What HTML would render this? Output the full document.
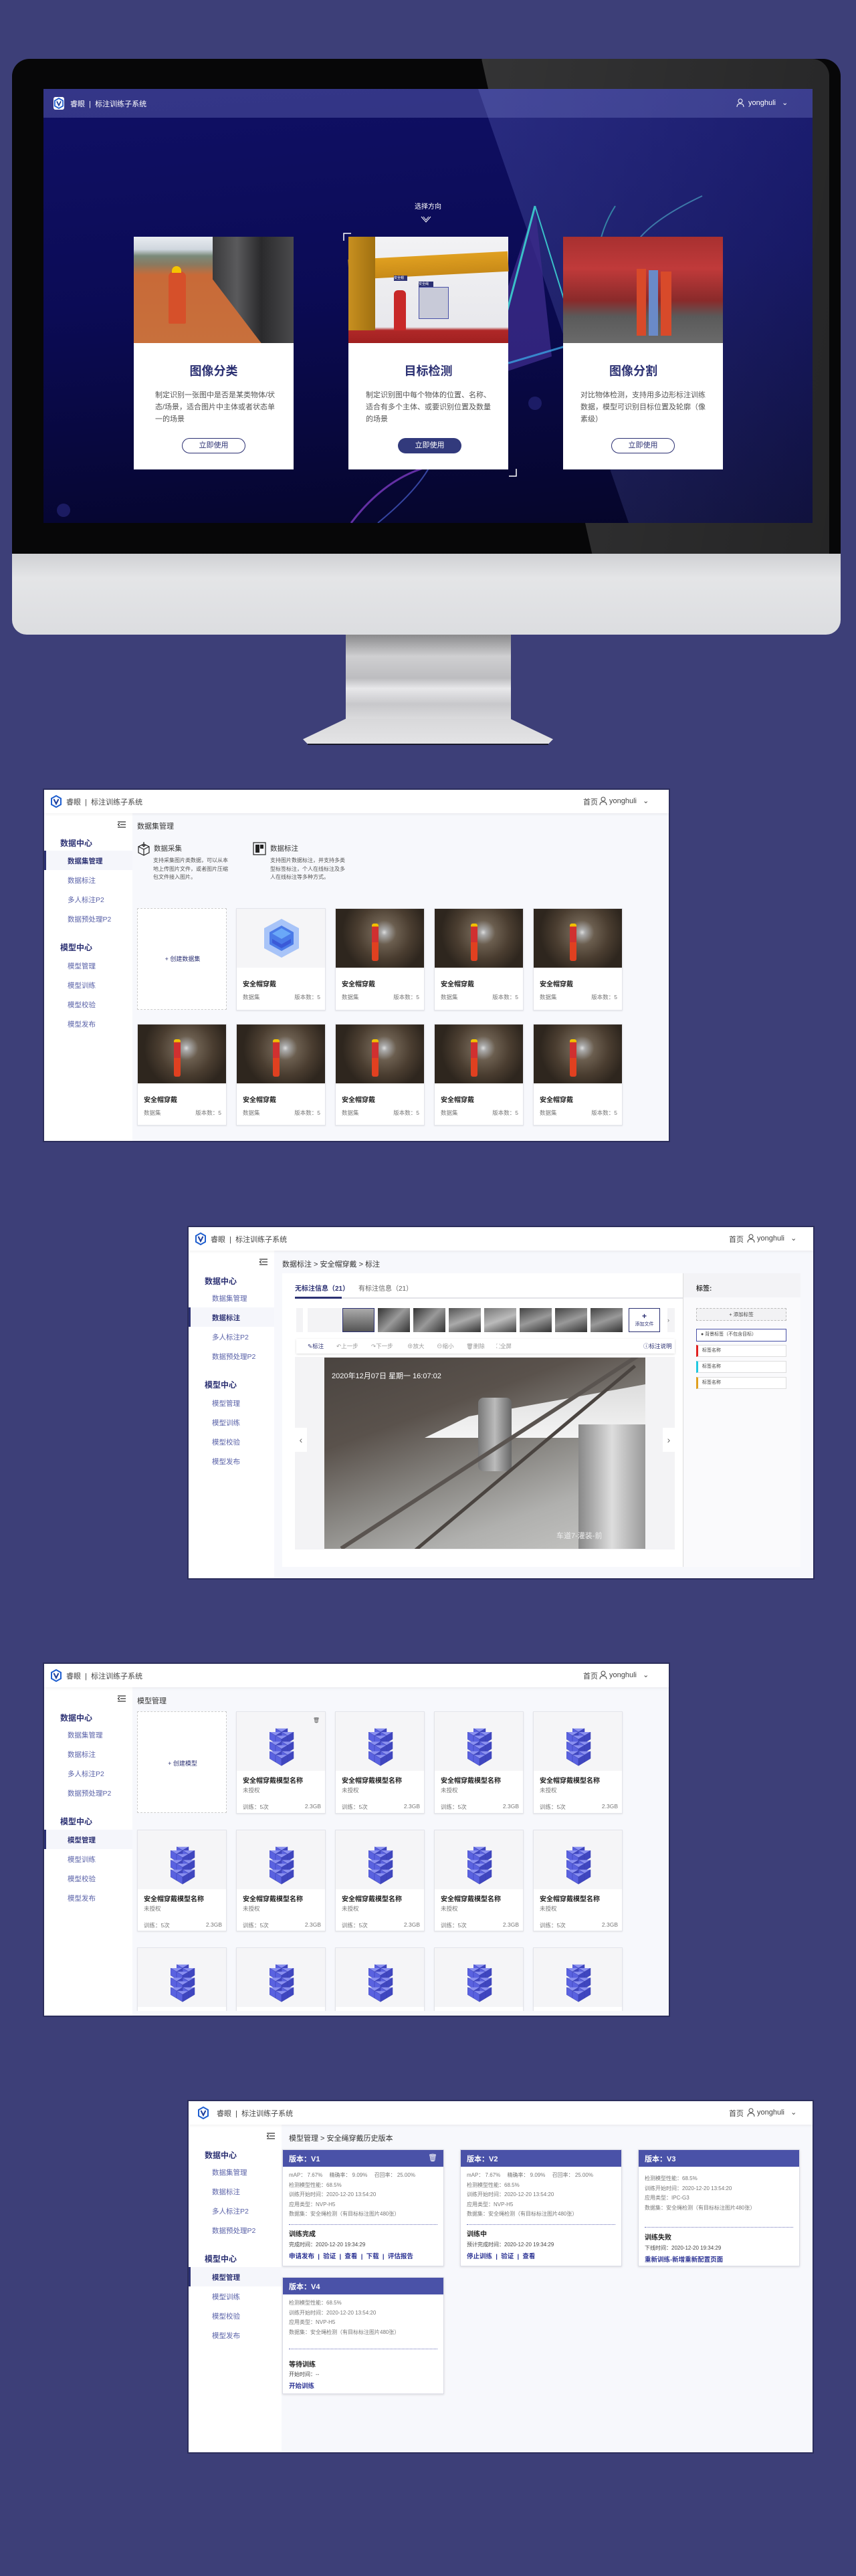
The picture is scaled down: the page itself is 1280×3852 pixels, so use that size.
<!DOCTYPE html>
<html><head><meta charset="utf-8">
<style>
*{margin:0;padding:0;box-sizing:border-box}
body{width:1280px;height:3852px;position:relative;overflow:hidden;background:#3d3f78;font-family:"Liberation Sans","Noto Sans CJK SC",sans-serif;color:#333}
.a{position:absolute}
.panel{position:absolute;background:#f7f8fc;overflow:hidden;box-shadow:0 0 0 2px #2c2e5c}
.hdr{position:absolute;left:0;top:0;right:0;height:35px;background:#fff;box-shadow:0 2px 4px rgba(0,0,0,.05);z-index:2}
.logo{position:absolute;left:10px;top:8px;width:16px;height:19px}
.brand{position:absolute;left:33px;top:10px;font-size:11px;color:#444;white-space:nowrap}
.usr{position:absolute;top:10px;font-size:11px;color:#444;white-space:nowrap}
.sb{position:absolute;left:0;top:35px;bottom:0;background:#fff}
.sb .t{position:absolute;right:10px;top:12px;width:12px;height:10px}
.sb .h{position:absolute;left:24px;font-size:12px;font-weight:bold;color:#2c3173}
.sb .i{position:absolute;left:35px;font-size:10.5px;color:#5a62a8}
.sb .act{position:absolute;left:0;right:0;height:29px;background:#f5f6fb;border-left:3px solid #2c3173}
.sb .i.on{color:#2c3173;font-weight:bold}
.card{position:absolute;width:134px;background:#fff;border:1px solid #e3e4ea;box-shadow:0 1px 2px rgba(0,0,0,.08);overflow:hidden}
.card .img{position:absolute;left:0;top:0;right:0;height:88px}
.card .tt{position:absolute;left:9px;font-size:10px;font-weight:bold;color:#222;white-space:nowrap}
.card .m{position:absolute;font-size:8.5px;color:#777;white-space:nowrap}
.tunnel{background:radial-gradient(circle at 55% 40%,#ddd 0,#aaa 5%,#6b5e4f 20%,#4a3d30 45%,#2e261e 70%),#3a3028}
.tunnel::after{content:"";position:absolute;left:54px;top:22px;width:10px;height:56px;background:linear-gradient(#f0c000 0,#f0c000 8%,#d03030 8%,#d03030 50%,#e04020 50%);border-radius:3px}
.cube{background:#f5f5f7}
.v{position:absolute;width:242px;background:#fff;border:1px solid #dcdde6;box-shadow:0 1px 3px rgba(0,0,0,.12)}
.v .vh{height:25px;background:#4a52a8;color:#fff;font-size:11px;font-weight:bold;padding:5px 9px}
.v .l{position:absolute;left:9px;font-size:8px;color:#777;white-space:nowrap}
.v .dl{position:absolute;left:9px;right:9px;border-top:1px dotted #6b70b8}
.v .s{position:absolute;left:9px;font-size:10px;font-weight:bold;color:#222}
.v .k{position:absolute;left:9px;font-size:9.5px;color:#2c3394;font-weight:bold;white-space:nowrap}
</style></head><body>

<svg width="0" height="0" style="position:absolute">
<defs>
<symbol id="lg" viewBox="0 0 16 19"><path d="M8 1 L15 5 L15 14 L8 18 L1 14 L1 5Z" fill="none" stroke="#1f5fd0" stroke-width="2"/><path d="M4.5 6 L8 13 L11.5 6" fill="none" stroke="#1f3f9a" stroke-width="2"/></symbol>
<symbol id="cb" viewBox="0 0 60 80">
<g stroke="#3b42b0" stroke-width=".5">
<g><path d="M0 0 l10 -6 l10 6 l-10 6z" fill="#8a90f0"/><path d="M0 0 v12 l10 6 v-12z" fill="#5a62e0"/><path d="M20 0 v12 l-10 6 v-12z" fill="#3f46c0"/></g>
</g></symbol>
<symbol id="cubes" viewBox="0 0 60 80">
<use href="#cb" x="20" y="14"/>
<use href="#cb" x="10" y="20"/><use href="#cb" x="30" y="20"/>
<use href="#cb" x="20" y="26"/>
<use href="#cb" x="10" y="36"/><use href="#cb" x="30" y="36"/>
<use href="#cb" x="20" y="42"/>
<use href="#cb" x="10" y="52"/><use href="#cb" x="30" y="52"/>
<use href="#cb" x="20" y="58"/>
</symbol>
<symbol id="us" viewBox="0 0 12 14"><circle cx="6" cy="4" r="3" fill="none" stroke="#444" stroke-width="1"/><path d="M1 13 Q1 8 6 8 Q11 8 11 13" fill="none" stroke="#444" stroke-width="1"/></symbol>
<symbol id="tg" viewBox="0 0 12 10"><path d="M0 1h12M4 5h8M0 9h12M3 3L0 5l3 2" fill="none" stroke="#333" stroke-width="1.2"/></symbol>
</defs></svg>

<!-- ============ MONITOR ============ -->
<div class="a" style="left:18px;top:88px;width:1239px;height:745px;background:#070708;border-radius:26px 26px 0 0"></div>
<div class="a" style="left:720px;top:88px;width:520px;height:745px;background:linear-gradient(100deg,rgba(255,255,255,0) 0,rgba(255,255,255,.18) 1px,rgba(255,255,255,.12) 100%);clip-path:polygon(0 0,100% 0,100% 100%,32% 100%);border-radius:0 26px 0 0"></div>
<div class="a" style="left:18px;top:828px;width:1239px;height:121px;background:linear-gradient(#cfd0d3,#e4e5e7 30%,#dcdde0);border-radius:0 0 22px 22px"></div>
<div class="a" style="left:517px;top:949px;width:247px;height:130px;background:linear-gradient(#8a8a8c,#cfcfd1 25%,#bdbdc0 50%,#e8e8ea 62%,#c8c8cb 80%,#dedee0)"></div>
<div class="a" style="left:453px;top:1075px;width:374px;height:38px;background:linear-gradient(#d8d8da,#e4e4e6);clip-path:polygon(17% 0,83% 0,100% 80%,98% 100%,2% 100%,0 80%);"></div>
<div class="a" style="left:460px;top:1112px;width:360px;height:2px;background:#1a1a2a"></div>

<div class="a" style="left:65px;top:133px;width:1150px;height:649px;overflow:hidden;background:linear-gradient(175deg,#101066 0,#0b0b55 45%,#070738 80%,#050528 100%)">
  <div class="a" style="left:650px;top:0;width:500px;height:649px;background:linear-gradient(100deg,rgba(120,130,220,.25),rgba(80,90,180,.15));clip-path:polygon(0 0,100% 0,100% 100%,45% 100%)"></div>
  <svg class="a" style="left:0;top:0" width="1150" height="649">
    <path d="M855 175 Q820 230 830 300 Q840 360 790 450" stroke="#3a9ab0" stroke-width="2" fill="none" opacity=".8"/>
    <path d="M985 160 Q900 200 880 240 Q860 290 820 330" stroke="#4aa0c0" stroke-width="2" fill="none" opacity=".7"/>
    <path d="M735 175 L660 400 L670 430 L760 400 Z" fill="#3b2a8a" opacity=".8"/>
    <path d="M735 175 L670 420" stroke="#3ac0c8" stroke-width="3"/>
    <path d="M735 175 L780 320" stroke="#3ac0c8" stroke-width="2"/>
    <path d="M695 410 L1000 320" stroke="#3aa0e0" stroke-width="3" opacity=".8"/>
    <path d="M460 649 Q520 570 600 560 Q650 540 680 520" stroke="#7a3ac0" stroke-width="3" fill="none" opacity=".8"/>
    <path d="M500 649 Q560 600 580 560 Q600 530 640 510" stroke="#4a60d0" stroke-width="2" fill="none" opacity=".7"/>
    <circle cx="805" cy="232" r="8" fill="#3a4aa0" opacity=".6"/><circle cx="990" cy="230" r="7" fill="#3a4aa0" opacity=".5"/>
    <circle cx="30" cy="630" r="10" fill="#2a2a80" opacity=".6"/><circle cx="735" cy="470" r="10" fill="#2a2a80" opacity=".6"/>
  </svg>
  <div class="a" style="left:0;top:0;width:1150px;height:43px;background:rgba(120,125,200,.35)"></div>
  <svg class="a" style="left:15px;top:12px" width="16" height="19"><rect x="0" y="0" width="16" height="19" rx="3" fill="#fff"/><use href="#lg" x="1" y="1" width="14" height="17"/></svg>
  <div class="a" style="left:40px;top:14px;font-size:11px;color:#fff;white-space:nowrap">睿眼 &nbsp;|&nbsp; 标注训练子系统</div>
  <svg class="a" style="left:1036px;top:14px" width="12" height="14"><circle cx="6" cy="4" r="3" fill="none" stroke="#fff"/><path d="M1 13 Q1 8 6 8 Q11 8 11 13" fill="none" stroke="#fff"/></svg>
  <div class="a" style="left:1054px;top:14px;font-size:11px;color:#fff">yonghuli &nbsp;&nbsp;⌄</div>
  <div class="a" style="left:555px;top:167px;font-size:10px;color:#fff">选择方向</div>
  <svg class="a" style="left:564px;top:190px" width="16" height="12"><path d="M1 1l7 8 7-8M4 1l4 5 4-5" stroke="#fff" fill="none"/></svg>

  <div class="a" style="left:135px;top:221px;width:239px;height:348px;background:#fff">
    <div class="a" style="left:0;top:0;width:239px;height:159px;background:linear-gradient(#e8ecf0 0,#cfd6de 12%,#7a8a7a 18%,#8a7a60 26%,#c86a38 36%,#c8703c 100%)"></div>
    <div class="a" style="left:118px;top:0;width:121px;height:159px;background:linear-gradient(90deg,#3a3a3c,#5a5a5c 30%,#2a2a2c 60%,#4a4a4c);clip-path:polygon(0 0,100% 0,100% 100%,60% 100%,0 40%)"></div>
    <div class="a" style="left:52px;top:52px;width:26px;height:78px;background:#d6502a;border-radius:8px 8px 2px 2px"></div>
    <div class="a" style="left:57px;top:44px;width:14px;height:10px;background:#f5c400;border-radius:7px 7px 0 0"></div>
    <div class="a" style="left:0;top:187px;width:239px;text-align:center;font-size:18px;font-weight:bold;color:#2c3173">图像分类</div>
    <div class="a" style="left:32px;top:228px;width:180px;font-size:11px;line-height:18px;color:#555">制定识别一张图中是否是某类物体/状态/场景，适合图片中主体或者状态单一的场景</div>
    <div class="a" style="left:72px;top:301px;width:95px;height:23px;border:1.5px solid #2c3173;border-radius:12px;text-align:center;font-size:11px;line-height:20px;color:#2c3173">立即使用</div>
  </div>
  <div class="a" style="left:456px;top:221px;width:239px;height:348px;background:#fff">
    <div class="a" style="left:0;top:0;width:239px;height:159px;background:linear-gradient(#f2f2f4,#e8e8ec 85%,#b02828 88%,#a02020)"></div>
    <div class="a" style="left:0;top:28px;width:239px;height:30px;background:linear-gradient(#e0a020,#c88a18);transform:rotate(-3deg)"></div>
    <div class="a" style="left:0;top:0;width:40px;height:140px;background:linear-gradient(90deg,#c89020,#a07010)"></div>
    <div class="a" style="left:68px;top:80px;width:18px;height:60px;background:#c82828;border-radius:6px 6px 0 0"></div>
    <div class="a" style="left:105px;top:75px;width:45px;height:48px;background:#c8cad8;border:1px solid #4a52a8"></div>
    <div class="a" style="left:68px;top:58px;width:20px;height:8px;background:#2c3173;font-size:5px;color:#fff">安全帽</div>
    <div class="a" style="left:105px;top:67px;width:22px;height:8px;background:#2c3173;font-size:5px;color:#fff">安全绳</div>
    <div class="a" style="left:0;top:187px;width:239px;text-align:center;font-size:18px;font-weight:bold;color:#2c3173">目标检测</div>
    <div class="a" style="left:26px;top:228px;width:190px;font-size:11px;line-height:18px;color:#555">制定识别图中每个物体的位置、名称、适合有多个主体、或要识别位置及数量的场景</div>
    <div class="a" style="left:74px;top:301px;width:95px;height:23px;background:#323a7c;border-radius:12px;text-align:center;font-size:11px;line-height:23px;color:#fff">立即使用</div>
  </div>
  <div class="a" style="left:777px;top:221px;width:239px;height:348px;background:#fff">
    <div class="a" style="left:0;top:0;width:239px;height:159px;background:linear-gradient(#a83030,#c03a3a 30%,#8a2a2a 60%,#5a5a5a 75%,#6a6a6a)"></div>
    <div class="a" style="left:110px;top:48px;width:14px;height:100px;background:#d84a2a"></div>
    <div class="a" style="left:128px;top:50px;width:14px;height:98px;background:#6a8ac8"></div>
    <div class="a" style="left:146px;top:52px;width:16px;height:96px;background:#d84a2a"></div>
    <div class="a" style="left:0;top:187px;width:210px;text-align:center;font-size:18px;font-weight:bold;color:#2c3173">图像分割</div>
    <div class="a" style="left:26px;top:228px;width:190px;font-size:11px;line-height:18px;color:#555">对比物体检测，支持用多边形标注训练数据，模型可识别目标位置及轮廓（像素级）</div>
    <div class="a" style="left:72px;top:301px;width:95px;height:23px;border:1.5px solid #2c3173;border-radius:12px;text-align:center;font-size:11px;line-height:20px;color:#2c3173">立即使用</div>
  </div>
  <svg class="a" style="left:448px;top:215px" width="260" height="365"><path d="M1 12 V1 H12 M248 364 H259 V353" stroke="#fff" stroke-width="1.5" fill="none"/></svg>
</div>

<!-- ============ PANEL 2 ============ -->
<div class="panel" style="left:66px;top:1181px;width:934px;height:525px">
  <div class="hdr"><svg class="logo"><use href="#lg"/></svg><div class="brand">睿眼 &nbsp;|&nbsp; 标注训练子系统</div>
  <div class="usr" style="left:806px">首页</div><svg class="a" style="left:830px;top:10px" width="12" height="14"><use href="#us"/></svg><div class="usr" style="left:845px">yonghuli &nbsp;&nbsp;⌄</div></div>
  <div class="sb" style="width:132px">
    <svg class="t"><use href="#tg"/></svg>
    <div class="act" style="top:56px"></div>
    <div class="h" style="top:36px">数据中心</div>
    <div class="i on" style="top:64px">数据集管理</div><div class="i" style="top:93px">数据标注</div><div class="i" style="top:122px">多人标注P2</div><div class="i" style="top:151px">数据预处理P2</div>
    <div class="h" style="top:192px">模型中心</div>
    <div class="i" style="top:221px">模型管理</div><div class="i" style="top:250px">模型训练</div><div class="i" style="top:279px">模型校验</div><div class="i" style="top:308px">模型发布</div>
  </div>
  <div class="a" style="left:139px;top:46px;font-size:11px;color:#333">数据集管理</div>
  <svg class="a" style="left:139px;top:77px" width="20" height="22"><path d="M10 4 L18 8 V17 L10 21 L2 17 V8Z M2 8 L10 12 L18 8 M10 12 V21 M10 1 V8 M7 5 L10 8 L13 5" fill="none" stroke="#222" stroke-width="1.2"/></svg>
  <div class="a" style="left:164px;top:80px;font-size:10.5px;color:#333">数据采集</div>
  <div class="a" style="left:163px;top:100px;width:115px;font-size:8px;line-height:12.5px;color:#555">支持采集图片类数据，可以从本地上传图片文件，或者图片压缩包文件接入图片。</div>
  <svg class="a" style="left:311px;top:77px" width="22" height="22"><rect x="2" y="2" width="18" height="18" fill="none" stroke="#222" stroke-width="1.2"/><rect x="5" y="5" width="6" height="12" fill="#222"/><rect x="12" y="5" width="5" height="6" fill="#222"/></svg>
  <div class="a" style="left:338px;top:80px;font-size:10.5px;color:#333">数据标注</div>
  <div class="a" style="left:338px;top:100px;width:115px;font-size:8px;line-height:12.5px;color:#555">支持图片数据标注，并支持多类型标签标注，个人在线标注及多人在线标注等多种方式。</div>

  <div class="a" style="left:139px;top:177px;width:134px;height:152px;border:1px dashed #ccc;background:#fff"><div class="a" style="left:0;top:68px;width:134px;text-align:center;font-size:9px;color:#2c3173">+ 创建数据集</div></div>
  <div class="card" style="left:287px;top:177px;height:153px"><div class="img" style="background:#f5f5f7"><svg class="a" style="left:37px;top:13px" width="60" height="62"><path d="M30 2 L56 16 V46 L30 60 L4 46 V16Z" fill="#a8c4f8"/><path d="M30 12 L48 22 V40 L30 50 L12 40 V22Z" fill="#4a7ae8"/><path d="M30 16 L44 24 L30 32 L16 24Z" fill="#6aa8f8"/><path d="M16 32 L30 40 L44 32 V38 L30 46 L16 38Z" fill="#3a5ad8"/></svg></div><div class="tt" style="top:104px">安全帽穿戴</div><div class="m" style="left:9px;top:126px">数据集</div><div class="m" style="right:7px;top:126px">版本数：5</div></div>
  <div class="card" style="left:435px;top:177px;height:153px"><div class="img tunnel"></div><div class="tt" style="top:104px">安全帽穿戴</div><div class="m" style="left:9px;top:126px">数据集</div><div class="m" style="right:7px;top:126px">版本数：5</div></div>
  <div class="card" style="left:583px;top:177px;height:153px"><div class="img tunnel"></div><div class="tt" style="top:104px">安全帽穿戴</div><div class="m" style="left:9px;top:126px">数据集</div><div class="m" style="right:7px;top:126px">版本数：5</div></div>
  <div class="card" style="left:731px;top:177px;height:153px"><div class="img tunnel"></div><div class="tt" style="top:104px">安全帽穿戴</div><div class="m" style="left:9px;top:126px">数据集</div><div class="m" style="right:7px;top:126px">版本数：5</div></div>

  <div class="card" style="left:139px;top:350px;height:152px"><div class="img tunnel"></div><div class="tt" style="top:104px">安全帽穿戴</div><div class="m" style="left:9px;top:126px">数据集</div><div class="m" style="right:7px;top:126px">版本数：5</div></div>
  <div class="card" style="left:287px;top:350px;height:152px"><div class="img tunnel"></div><div class="tt" style="top:104px">安全帽穿戴</div><div class="m" style="left:9px;top:126px">数据集</div><div class="m" style="right:7px;top:126px">版本数：5</div></div>
  <div class="card" style="left:435px;top:350px;height:152px"><div class="img tunnel"></div><div class="tt" style="top:104px">安全帽穿戴</div><div class="m" style="left:9px;top:126px">数据集</div><div class="m" style="right:7px;top:126px">版本数：5</div></div>
  <div class="card" style="left:583px;top:350px;height:152px"><div class="img tunnel"></div><div class="tt" style="top:104px">安全帽穿戴</div><div class="m" style="left:9px;top:126px">数据集</div><div class="m" style="right:7px;top:126px">版本数：5</div></div>
  <div class="card" style="left:731px;top:350px;height:152px"><div class="img tunnel"></div><div class="tt" style="top:104px">安全帽穿戴</div><div class="m" style="left:9px;top:126px">数据集</div><div class="m" style="right:7px;top:126px">版本数：5</div></div>
</div>

<!-- ============ PANEL 3 ============ -->
<div class="panel" style="left:282px;top:1835px;width:934px;height:525px">
  <div class="hdr"><svg class="logo"><use href="#lg"/></svg><div class="brand">睿眼 &nbsp;|&nbsp; 标注训练子系统</div>
  <div class="usr" style="left:808px">首页</div><svg class="a" style="left:835px;top:10px" width="12" height="14"><use href="#us"/></svg><div class="usr" style="left:850px">yonghuli &nbsp;&nbsp;⌄</div></div>
  <div class="sb" style="width:128px">
    <svg class="t"><use href="#tg"/></svg>
    <div class="act" style="top:85px"></div>
    <div class="h" style="top:37px">数据中心</div>
    <div class="i" style="top:64px">数据集管理</div><div class="i on" style="top:93px">数据标注</div><div class="i" style="top:122px">多人标注P2</div><div class="i" style="top:151px">数据预处理P2</div>
    <div class="h" style="top:192px">模型中心</div>
    <div class="i" style="top:221px">模型管理</div><div class="i" style="top:250px">模型训练</div><div class="i" style="top:279px">模型校验</div><div class="i" style="top:308px">模型发布</div>
  </div>
  <div class="a" style="left:140px;top:47px;font-size:11px;color:#333">数据标注 &gt; 安全帽穿戴 &gt; 标注</div>
  <div class="a" style="left:140px;top:69px;width:599px;height:439px;background:#fff"></div>
  <div class="a" style="left:739px;top:69px;width:176px;height:439px;background:#fafafc;border-left:1px solid #ddd"></div>
  <div class="a" style="left:740px;top:69px;width:175px;height:36px;background:#f3f3f6"></div>
  <div class="a" style="left:159px;top:83px;font-size:10px;color:#2c3173;font-weight:bold">无标注信息（21）</div>
  <div class="a" style="left:254px;top:83px;font-size:10px;color:#666">有标注信息（21）</div>
  <div class="a" style="left:159px;top:105px;width:580px;height:2px;background:#e3e3e8"></div>
  <div class="a" style="left:159px;top:104px;width:70px;height:3px;background:#2c3173"></div>
  <div class="a" style="left:161px;top:121px;width:10px;height:36px;background:#f3f3f5"></div>
  <div class="a" style="left:178px;top:121px;width:52px;height:36px;background:#f3f3f5"></div>
  <div class="a" style="left:230px;top:121px;width:48px;height:36px;background:linear-gradient(#aaa,#555);border:1px solid #2c3173"></div>
  <div class="a" style="left:283px;top:121px;width:48px;height:36px;background:linear-gradient(135deg,#333,#999 50%,#333)"></div>
  <div class="a" style="left:336px;top:121px;width:48px;height:36px;background:linear-gradient(135deg,#333,#999 50%,#333)"></div>
  <div class="a" style="left:389px;top:121px;width:48px;height:36px;background:linear-gradient(160deg,#555,#aaa 50%,#333)"></div>
  <div class="a" style="left:442px;top:121px;width:48px;height:36px;background:linear-gradient(160deg,#777,#bbb 50%,#444)"></div>
  <div class="a" style="left:495px;top:121px;width:48px;height:36px;background:linear-gradient(160deg,#444,#999 50%,#333)"></div>
  <div class="a" style="left:548px;top:121px;width:48px;height:36px;background:linear-gradient(160deg,#444,#999 50%,#333)"></div>
  <div class="a" style="left:601px;top:121px;width:48px;height:36px;background:linear-gradient(160deg,#444,#999 50%,#333)"></div>
  <div class="a" style="left:658px;top:121px;width:47px;height:36px;background:#fff;border:1px solid #2c3173;text-align:center;font-size:7px;color:#2c3173;line-height:10px;padding-top:6px"><b style="font-size:12px">+</b><br>添加文件</div>
  <div class="a" style="left:716px;top:121px;width:11px;height:36px;background:#f3f3f5;font-size:9px;color:#666;line-height:36px">›</div>
  <div class="a" style="left:161px;top:167px;width:566px;height:22px;background:#fff;box-shadow:0 1px 3px rgba(0,0,0,.15);font-size:8.5px;color:#999;line-height:22px;white-space:nowrap">
    <span class="a" style="left:17px;color:#2c3173">✎标注</span><span class="a" style="left:60px">↶上一步</span><span class="a" style="left:112px">↷下一步</span><span class="a" style="left:166px">⊕放大</span><span class="a" style="left:210px">⊖缩小</span><span class="a" style="left:254px">🗑删除</span><span class="a" style="left:299px">⛶全屏</span><span class="a" style="left:519px;color:#2c3173">ⓘ标注说明</span></div>
  <div class="a" style="left:159px;top:194px;width:568px;height:288px;background:#f3f3f5"></div>
  <div class="a" style="left:159px;top:300px;width:18px;height:36px;background:#fff;font-size:14px;color:#666;text-align:center;line-height:36px">‹</div>
  <div class="a" style="left:709px;top:300px;width:18px;height:36px;background:#fff;font-size:14px;color:#666;text-align:center;line-height:36px">›</div>
  <div class="a" style="left:203px;top:195px;width:480px;height:286px;overflow:hidden;background:linear-gradient(160deg,#4a4440 0,#5a524c 30%,#8a8884 55%,#b0b0ae 75%,#c8c8c6)">
    <div class="a" style="left:150px;top:40px;width:330px;height:80px;background:linear-gradient(#ddd,#f4f4f4);clip-path:polygon(20% 60%,100% 0,100% 100%,0 100%)"></div>
    <div class="a" style="left:230px;top:60px;width:50px;height:110px;background:linear-gradient(90deg,#777,#bbb,#666);border-radius:8px"></div>
    <div class="a" style="left:380px;top:100px;width:100px;height:186px;background:linear-gradient(90deg,#888,#ddd,#999)"></div>
    <div class="a" style="left:-20px;top:130px;width:560px;height:6px;background:#5a5450;transform:rotate(-33deg)"></div>
    <div class="a" style="left:-30px;top:190px;width:560px;height:5px;background:#4a4440;transform:rotate(-40deg)"></div>
    <div class="a" style="left:11px;top:19px;font-size:11px;color:#fff">2020年12月07日  星期一  16:07:02</div>
    <div class="a" style="left:347px;top:258px;font-size:11px;color:#eee">车道7-灌装-前</div>
  </div>
  <div class="a" style="left:759px;top:83px;font-size:10px;color:#333;font-weight:bold">标签:</div>
  <div class="a" style="left:759px;top:121px;width:135px;height:19px;border:1px dashed #bbb;background:#f2f2f4;text-align:center;font-size:7.5px;line-height:17px;color:#444">+ 添加标签</div>
  <div class="a" style="left:759px;top:152px;width:135px;height:19px;border:1.5px solid #4a52a8;background:#fff;font-size:7px;line-height:16px;color:#444;padding-left:6px">● 背景标签（不包含目标）</div>
  <div class="a" style="left:759px;top:176px;width:135px;height:18px;border:1px solid #ddd;border-left:3px solid #e02020;background:#fff;font-size:7px;line-height:16px;color:#444;padding-left:6px">标签名称</div>
  <div class="a" style="left:759px;top:200px;width:135px;height:18px;border:1px solid #ddd;border-left:3px solid #20c8e0;background:#fff;font-size:7px;line-height:16px;color:#444;padding-left:6px">标签名称</div>
  <div class="a" style="left:759px;top:224px;width:135px;height:18px;border:1px solid #ddd;border-left:3px solid #e0a020;background:#fff;font-size:7px;line-height:16px;color:#444;padding-left:6px">标签名称</div>
</div>

<!-- ============ PANEL 4 ============ -->
<div class="panel" style="left:66px;top:2488px;width:934px;height:526px">
  <div class="hdr"><svg class="logo"><use href="#lg"/></svg><div class="brand">睿眼 &nbsp;|&nbsp; 标注训练子系统</div>
  <div class="usr" style="left:806px">首页</div><svg class="a" style="left:830px;top:10px" width="12" height="14"><use href="#us"/></svg><div class="usr" style="left:845px">yonghuli &nbsp;&nbsp;⌄</div></div>
  <div class="sb" style="width:132px">
    <svg class="t"><use href="#tg"/></svg>
    <div class="act" style="top:213px"></div>
    <div class="h" style="top:37px">数据中心</div>
    <div class="i" style="top:64px">数据集管理</div><div class="i" style="top:93px">数据标注</div><div class="i" style="top:122px">多人标注P2</div><div class="i" style="top:151px">数据预处理P2</div>
    <div class="h" style="top:192px">模型中心</div>
    <div class="i on" style="top:221px">模型管理</div><div class="i" style="top:250px">模型训练</div><div class="i" style="top:279px">模型校验</div><div class="i" style="top:308px">模型发布</div>
  </div>
  <div class="a" style="left:139px;top:47px;font-size:11px;color:#333">模型管理</div>
  <div class="a" style="left:139px;top:71px;width:134px;height:152px;border:1px dashed #ccc;background:#fff"><div class="a" style="left:0;top:70px;width:134px;text-align:center;font-size:9px;color:#2c3173">+ 创建模型</div></div>
  <div class="card" style="left:287px;top:71px;height:153px"><div class="img cube"><svg class="a" style="left:37px;top:12px" width="60" height="72"><use href="#cubes"/></svg></div><div class="a" style="right:8px;top:8px;font-size:8px;color:#555">🗑</div><div class="tt" style="top:94px">安全帽穿戴模型名称</div><div class="m" style="left:9px;top:111px">未授权</div><div class="m" style="left:9px;top:136px">训练：5次</div><div class="m" style="right:6px;top:136px">2.3GB</div></div>
  <div class="card" style="left:435px;top:71px;height:153px"><div class="img cube"><svg class="a" style="left:37px;top:12px" width="60" height="72"><use href="#cubes"/></svg></div><div class="tt" style="top:94px">安全帽穿戴模型名称</div><div class="m" style="left:9px;top:111px">未授权</div><div class="m" style="left:9px;top:136px">训练：5次</div><div class="m" style="right:6px;top:136px">2.3GB</div></div>
  <div class="card" style="left:583px;top:71px;height:153px"><div class="img cube"><svg class="a" style="left:37px;top:12px" width="60" height="72"><use href="#cubes"/></svg></div><div class="tt" style="top:94px">安全帽穿戴模型名称</div><div class="m" style="left:9px;top:111px">未授权</div><div class="m" style="left:9px;top:136px">训练：5次</div><div class="m" style="right:6px;top:136px">2.3GB</div></div>
  <div class="card" style="left:731px;top:71px;height:153px"><div class="img cube"><svg class="a" style="left:37px;top:12px" width="60" height="72"><use href="#cubes"/></svg></div><div class="tt" style="top:94px">安全帽穿戴模型名称</div><div class="m" style="left:9px;top:111px">未授权</div><div class="m" style="left:9px;top:136px">训练：5次</div><div class="m" style="right:6px;top:136px">2.3GB</div></div>
  <div class="card" style="left:139px;top:248px;height:152px"><div class="img cube"><svg class="a" style="left:37px;top:12px" width="60" height="72"><use href="#cubes"/></svg></div><div class="tt" style="top:94px">安全帽穿戴模型名称</div><div class="m" style="left:9px;top:111px">未授权</div><div class="m" style="left:9px;top:136px">训练：5次</div><div class="m" style="right:6px;top:136px">2.3GB</div></div>
  <div class="card" style="left:287px;top:248px;height:152px"><div class="img cube"><svg class="a" style="left:37px;top:12px" width="60" height="72"><use href="#cubes"/></svg></div><div class="tt" style="top:94px">安全帽穿戴模型名称</div><div class="m" style="left:9px;top:111px">未授权</div><div class="m" style="left:9px;top:136px">训练：5次</div><div class="m" style="right:6px;top:136px">2.3GB</div></div>
  <div class="card" style="left:435px;top:248px;height:152px"><div class="img cube"><svg class="a" style="left:37px;top:12px" width="60" height="72"><use href="#cubes"/></svg></div><div class="tt" style="top:94px">安全帽穿戴模型名称</div><div class="m" style="left:9px;top:111px">未授权</div><div class="m" style="left:9px;top:136px">训练：5次</div><div class="m" style="right:6px;top:136px">2.3GB</div></div>
  <div class="card" style="left:583px;top:248px;height:152px"><div class="img cube"><svg class="a" style="left:37px;top:12px" width="60" height="72"><use href="#cubes"/></svg></div><div class="tt" style="top:94px">安全帽穿戴模型名称</div><div class="m" style="left:9px;top:111px">未授权</div><div class="m" style="left:9px;top:136px">训练：5次</div><div class="m" style="right:6px;top:136px">2.3GB</div></div>
  <div class="card" style="left:731px;top:248px;height:152px"><div class="img cube"><svg class="a" style="left:37px;top:12px" width="60" height="72"><use href="#cubes"/></svg></div><div class="tt" style="top:94px">安全帽穿戴模型名称</div><div class="m" style="left:9px;top:111px">未授权</div><div class="m" style="left:9px;top:136px">训练：5次</div><div class="m" style="right:6px;top:136px">2.3GB</div></div>
  <div class="card" style="left:139px;top:424px;height:152px"><div class="img cube"><svg class="a" style="left:37px;top:12px" width="60" height="72"><use href="#cubes"/></svg></div><div class="tt" style="top:94px">安全帽穿戴模型名称</div></div>
  <div class="card" style="left:287px;top:424px;height:152px"><div class="img cube"><svg class="a" style="left:37px;top:12px" width="60" height="72"><use href="#cubes"/></svg></div><div class="tt" style="top:94px">安全帽穿戴模型名称</div></div>
  <div class="card" style="left:435px;top:424px;height:152px"><div class="img cube"><svg class="a" style="left:37px;top:12px" width="60" height="72"><use href="#cubes"/></svg></div><div class="tt" style="top:94px">安全帽穿戴模型名称</div></div>
  <div class="card" style="left:583px;top:424px;height:152px"><div class="img cube"><svg class="a" style="left:37px;top:12px" width="60" height="72"><use href="#cubes"/></svg></div><div class="tt" style="top:94px">安全帽穿戴模型名称</div></div>
  <div class="card" style="left:731px;top:424px;height:152px"><div class="img cube"><svg class="a" style="left:37px;top:12px" width="60" height="72"><use href="#cubes"/></svg></div><div class="tt" style="top:94px">安全帽穿戴模型名称</div></div>
  <div class="a" style="left:132px;top:519px;width:802px;height:7px;background:#f7f8fc"></div>
</div>

<!-- ============ PANEL 5 ============ -->
<div class="panel" style="left:282px;top:3142px;width:933px;height:525px">
  <div class="hdr"><svg class="logo" style="left:14px"><use href="#lg"/></svg><div class="brand" style="left:42px">睿眼 &nbsp;|&nbsp; 标注训练子系统</div>
  <div class="usr" style="left:808px">首页</div><svg class="a" style="left:835px;top:10px" width="12" height="14"><use href="#us"/></svg><div class="usr" style="left:850px">yonghuli &nbsp;&nbsp;⌄</div></div>
  <div class="sb" style="width:139px">
    <svg class="t"><use href="#tg"/></svg>
    <div class="act" style="top:213px"></div>
    <div class="h" style="top:37px">数据中心</div>
    <div class="i" style="top:64px">数据集管理</div><div class="i" style="top:93px">数据标注</div><div class="i" style="top:122px">多人标注P2</div><div class="i" style="top:151px">数据预处理P2</div>
    <div class="h" style="top:192px">模型中心</div>
    <div class="i on" style="top:221px">模型管理</div><div class="i" style="top:250px">模型训练</div><div class="i" style="top:279px">模型校验</div><div class="i" style="top:308px">模型发布</div>
  </div>
  <div class="a" style="left:150px;top:47px;font-size:11px;color:#333">模型管理 &gt; 安全绳穿戴历史版本</div>

  <div class="v" style="left:140px;top:72px;height:175px"><div class="vh">版本：V1<span style="float:right;font-weight:normal">🗑</span></div>
    <div class="l" style="top:32px">mAP： 7.67%　 精确率： 9.09%　 召回率： 25.00%</div>
    <div class="l" style="top:47px">检测模型性能：68.5%</div>
    <div class="l" style="top:61px">训练开始时间：2020-12-20  13:54:20</div>
    <div class="l" style="top:76px">应用类型：NVP-H5</div>
    <div class="l" style="top:90px">数据集：安全绳检测（有目标标注图片480张）</div>
    <div class="dl" style="top:111px"></div>
    <div class="s" style="top:117px">训练完成</div>
    <div class="l" style="top:136px;color:#444">完成时间：2020-12-20  19:34:29</div>
    <div class="k" style="top:151px">申请发布 &nbsp;| &nbsp;验证 &nbsp;| &nbsp;查看 &nbsp;| &nbsp;下载 &nbsp;| &nbsp;评估报告</div></div>

  <div class="v" style="left:406px;top:72px;height:175px"><div class="vh">版本：V2</div>
    <div class="l" style="top:32px">mAP： 7.67%　 精确率： 9.09%　 召回率： 25.00%</div>
    <div class="l" style="top:47px">检测模型性能：68.5%</div>
    <div class="l" style="top:61px">训练开始时间：2020-12-20  13:54:20</div>
    <div class="l" style="top:76px">应用类型：NVP-H5</div>
    <div class="l" style="top:90px">数据集：安全绳检测（有目标标注图片480张）</div>
    <div class="dl" style="top:111px"></div>
    <div class="s" style="top:117px">训练中</div>
    <div class="l" style="top:136px;color:#444">预计完成时间：2020-12-20  19:34:29</div>
    <div class="k" style="top:151px">停止训练 &nbsp;| &nbsp;验证 &nbsp;| &nbsp;查看</div></div>

  <div class="v" style="left:672px;top:72px;height:175px"><div class="vh">版本：V3</div>
    <div class="l" style="top:37px">检测模型性能：68.5%</div>
    <div class="l" style="top:52px">训练开始时间：2020-12-20  13:54:20</div>
    <div class="l" style="top:66px">应用类型：IPC-G3</div>
    <div class="l" style="top:81px">数据集：安全绳检测（有目标标注图片480张）</div>
    <div class="dl" style="top:115px"></div>
    <div class="s" style="top:122px">训练失败</div>
    <div class="l" style="top:141px;color:#444">下线时间：2020-12-20  19:34:29</div>
    <div class="k" style="top:156px">重新训练-新增重新配置页面</div></div>

  <div class="v" style="left:140px;top:263px;height:175px"><div class="vh">版本：V4</div>
    <div class="l" style="top:32px">检测模型性能：68.5%</div>
    <div class="l" style="top:47px">训练开始时间：2020-12-20  13:54:20</div>
    <div class="l" style="top:61px">应用类型：NVP-H5</div>
    <div class="l" style="top:76px">数据集：安全绳检测（有目标标注图片480张）</div>
    <div class="dl" style="top:106px"></div>
    <div class="s" style="top:121px">等待训练</div>
    <div class="l" style="top:139px;color:#444">开始时间：--</div>
    <div class="k" style="top:154px">开始训练</div></div>
</div>
</body></html>
